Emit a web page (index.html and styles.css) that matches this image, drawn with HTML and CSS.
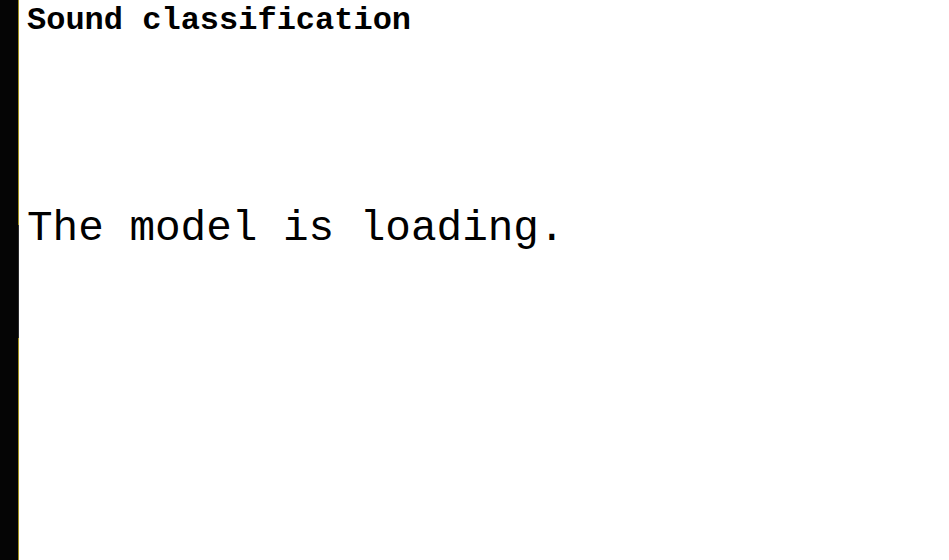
FILE: index.html
```html
<!DOCTYPE html>
<html>
<head>
<meta charset="utf-8">
<title>Sound classification</title>
<link rel="stylesheet" href="styles.css">
</head>
<body>
<div class="layout">
  <div class="side"></div>
  <div class="edge"></div>
  <main class="content">
    <h1 class="title">Sound classification</h1>
    <p class="status">The model is loading.</p>
  </main>
</div>
</body>
</html>
```

FILE: styles.css
```css
html, body {
  margin: 0;
  padding: 0;
  background: #ffffff;
  height: 100%;
}
.layout {
  display: flex;
  height: 100%;
}
.side {
  width: 18px;
  background: #050505;
  flex: none;
}
.edge {
  width: 1px;
  flex: none;
  background: linear-gradient(to bottom, #a08f1c 0, #a08f1c 225px, #2a2a2a 225px, #2a2a2a 338px, #a08f1c 338px, #a08f1c 100%);
}
.content {
  padding-left: 8px;
  padding-top: 2px;
  font-family: "Courier New", "Nimbus Mono PS", "FreeMono", "Liberation Mono", monospace;
  color: #000;
}
.title {
  margin: 0;
  font-size: 32px;
  font-weight: bold;
  line-height: normal;
}
.status {
  margin: 165px 0 0 0;
  font-size: 42.67px;
  line-height: normal;
}
```
